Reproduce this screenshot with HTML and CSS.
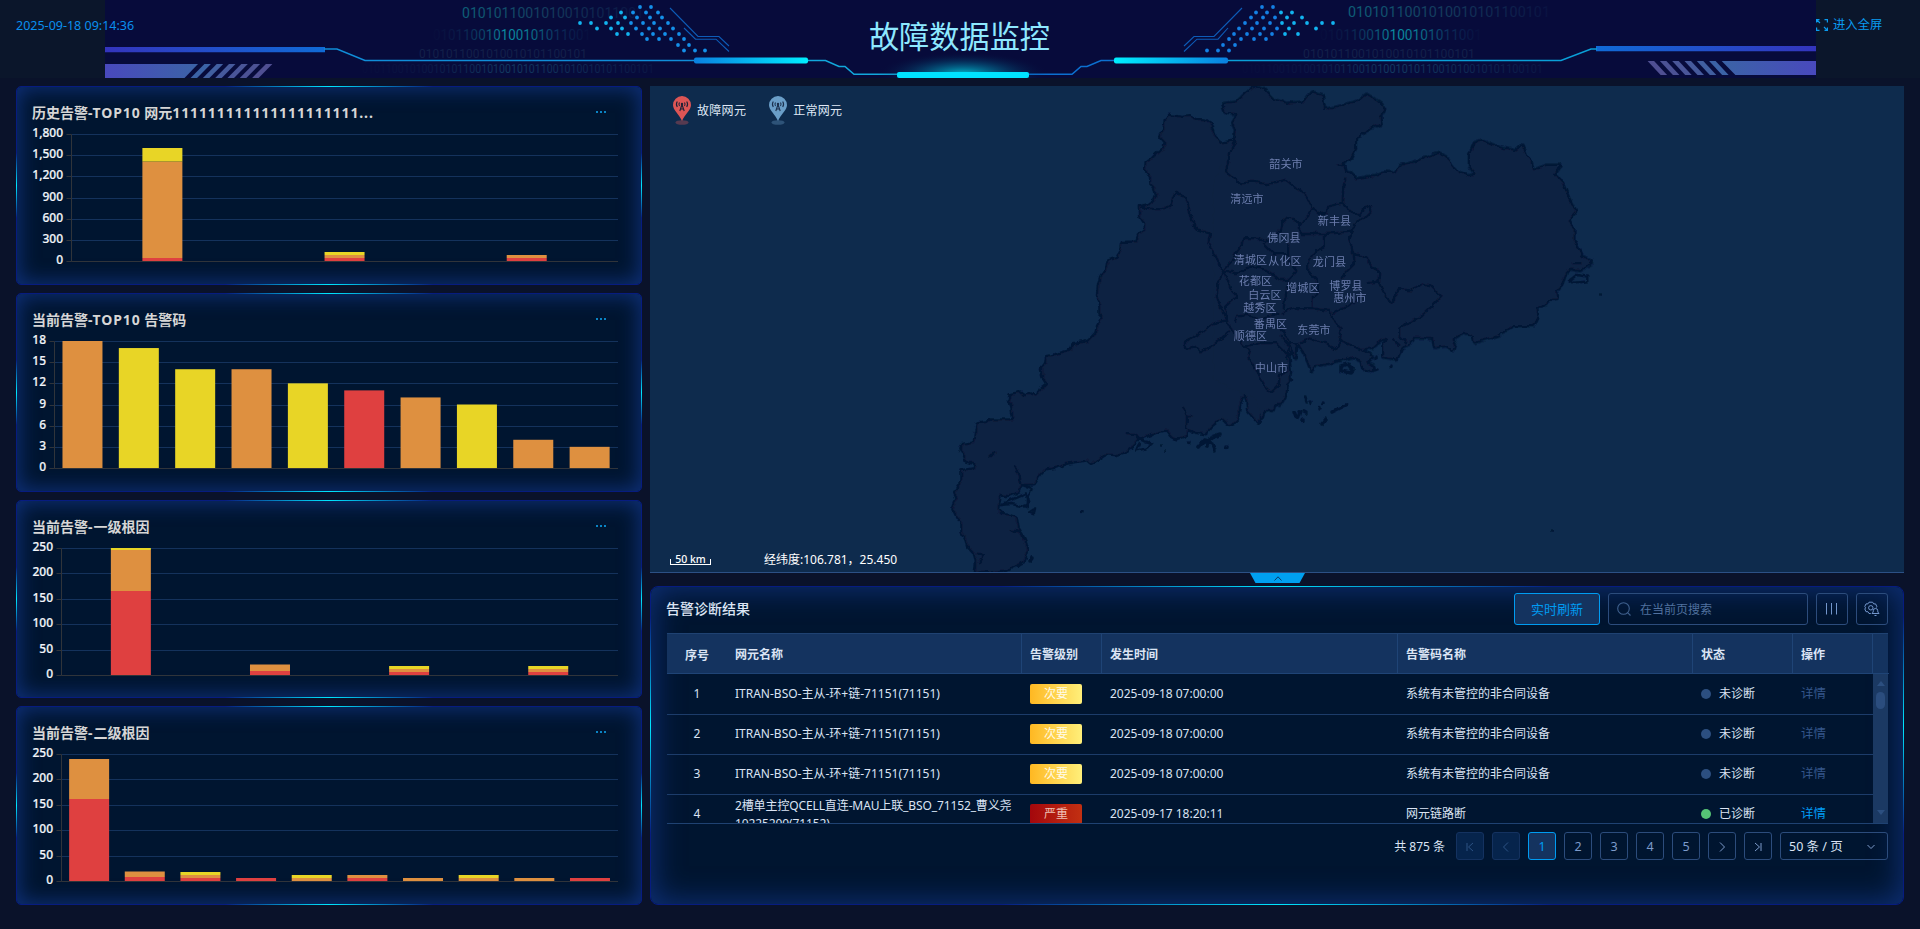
FILE: index.html
```html
<!DOCTYPE html>
<html lang="zh-CN">
<head>
<meta charset="utf-8">
<title>故障数据监控</title>
<link rel="stylesheet" href="styles.css">
</head>
<body>
<header class="top">
  <svg class="banner" viewBox="105 0 1711 78" width="1711" height="78">
    <defs>
      <linearGradient id="barL"><stop offset="0" stop-color="#3434bd"/><stop offset="1" stop-color="#106bd6"/></linearGradient>
      <linearGradient id="barR"><stop offset="0" stop-color="#106bd6"/><stop offset="1" stop-color="#3434bd"/></linearGradient>
      <linearGradient id="blkL"><stop offset="0" stop-color="#4949bd"/><stop offset="1" stop-color="#3b63a6"/></linearGradient>
      <linearGradient id="blkR"><stop offset="0" stop-color="#3b63a6"/><stop offset="1" stop-color="#4949bd"/></linearGradient>
      <linearGradient id="cyL"><stop offset="0" stop-color="#0a80e0"/><stop offset="1" stop-color="#00efff"/></linearGradient>
      <linearGradient id="cyR"><stop offset="0" stop-color="#00efff"/><stop offset="1" stop-color="#0a80e0"/></linearGradient>
      <linearGradient id="n1"><stop offset="0" stop-color="#0d6078"/><stop offset=".45" stop-color="#143c5e"/><stop offset="1" stop-color="#0a1242"/></linearGradient>
      <linearGradient id="n2"><stop offset="0" stop-color="#080d3c"/><stop offset=".16" stop-color="#0a1a48"/><stop offset=".32" stop-color="#0b4468"/><stop offset=".46" stop-color="#0a90a4"/><stop offset=".6" stop-color="#0a7890"/><stop offset=".8" stop-color="#0b2a58"/><stop offset="1" stop-color="#080d3c"/></linearGradient>
      <linearGradient id="n4"><stop offset="0" stop-color="#080d3c"/><stop offset=".2" stop-color="#0b1543"/><stop offset=".5" stop-color="#123a60"/><stop offset="1" stop-color="#0b1644"/></linearGradient>
      <radialGradient id="glow"><stop offset="0" stop-color="#00d8e8" stop-opacity=".85"/><stop offset=".5" stop-color="#0090b0" stop-opacity=".35"/><stop offset="1" stop-color="#070c3a" stop-opacity="0"/></radialGradient>
    </defs>
    <rect x="105" y="0" width="1711" height="78" fill="#070b3b"/>
    <g class="bits">
      <text x="462" y="18" font-size="15" textLength="182" lengthAdjust="spacingAndGlyphs" fill="url(#n1)">01010110010100101011001</text>
      <text x="433" y="40" font-size="14" textLength="158" lengthAdjust="spacingAndGlyphs" fill="url(#n2)">010110010100101011001</text>
      <text x="419" y="58" font-size="12" textLength="168" lengthAdjust="spacingAndGlyphs" fill="#13204a">0101011001010010101100101</text>
      <text x="362" y="73" font-size="12" textLength="292" lengthAdjust="spacingAndGlyphs" fill="url(#n4)">0101100101001010110010100101011001010010101100101</text>
      <text x="1348" y="17" font-size="15" textLength="202" lengthAdjust="spacingAndGlyphs" fill="url(#n1)">0101011001010010101100101</text>
      <text x="1320" y="40" font-size="14" textLength="162" lengthAdjust="spacingAndGlyphs" fill="url(#n2)">010110010100101011001</text>
      <text x="1303" y="58" font-size="12" textLength="172" lengthAdjust="spacingAndGlyphs" fill="#13204a">0101011001010010101100101</text>
      <text x="1242" y="73" font-size="12" textLength="301" lengthAdjust="spacingAndGlyphs" fill="url(#n4)">0101100101001010110010100101011001010010101100101</text>
    </g>
    <g id="stripes" fill="#4a5596"></g>
    <path d="M105 64H198L184.500 78H105z" fill="url(#blkL)"/>
    <path d="M1721.700 61H1816V75H1735.400z" fill="url(#blkR)"/>
    <path d="M105 47H325V52.200H105z" fill="url(#barL)"/>
    <path d="M1596 46H1816V51.200H1596z" fill="url(#barR)"/>
    <g fill="none" stroke-width="1.600">
      <path d="M324 49H337L365 60.500H694" stroke="#108dd8"/>
      <path d="M808 60.500H825.500L839 66.500H845L854 74.300H898" stroke="#12a8dc"/>
      <path d="M1028 74.300H1072L1081 66.500H1087L1101 60.500H1114" stroke="#0c70d0"/>
      <path d="M1228 60.500H1561L1591 49H1597" stroke="#0aa0d8"/>
      <g stroke="#0d5cb8" stroke-width="1.100">
        <path d="M670 8L698 36.500H719L729 46M684 28L695.500 39.200H716L729 51.500"/>
        <path d="M1242 8L1214 36.500H1194L1184 46M1228 28L1218 39.200H1197L1184 51.500"/>
      </g>
    </g>
    <rect x="694" y="57.500" width="114" height="6" rx="2" fill="url(#cyL)"/>
    <rect x="1114" y="57.500" width="114" height="6" rx="2" fill="url(#cyR)"/>
    <ellipse cx="963" cy="74" rx="86" ry="22" fill="url(#glow)"/>
    <rect x="897" y="72" width="132" height="6" rx="2" fill="#00e2ff"/>
    <g id="dots"></g>
  </svg>
  <h1 class="title">故障数据监控</h1>
  <span class="clock">2025-09-18 09:14:36</span>
  <span class="full">
    <svg width="12" height="12" viewBox="0 0 12 12" fill="none" stroke="currentColor" stroke-width="1.200"><path d="M.6 3.500V.6H3.500M.6.6L4 4M8.500.6h2.900v2.900M.6 8.500v2.900h2.900M11.400 8.500v2.900H8.500M11.400 11.400L8 8"/></svg>
    <span>进入全屏</span>
  </span>
</header>
<main class="board">
  <section class="charts">
    <article class="panel"><div class="phead"><h2>历史告警-<span class="lat">TOP10</span> 网元<span class="lat">111111111111111111111...</span></h2><i class="more"></i></div><svg class="chart" id="c1"></svg></article>
    <article class="panel"><div class="phead"><h2>当前告警-<span class="lat">TOP10</span> 告警码</h2><i class="more"></i></div><svg class="chart" id="c2"></svg></article>
    <article class="panel"><div class="phead"><h2>当前告警<span class="lat">-</span>一级根因</h2><i class="more"></i></div><svg class="chart" id="c3"></svg></article>
    <article class="panel"><div class="phead"><h2>当前告警<span class="lat">-</span>二级根因</h2><i class="more"></i></div><svg class="chart" id="c4"></svg></article>
  </section>
  <section class="right">
    <div class="map">
      <svg class="geo" viewBox="650 86 1254 486" width="1254" height="486">
        <defs>
          <filter id="rough" x="-5%" y="-5%" width="110%" height="110%"><feTurbulence type="fractalNoise" baseFrequency=".14" numOctaves="2" seed="4"/><feDisplacementMap in="SourceGraphic" scale="5" xChannelSelector="R" yChannelSelector="G"/></filter>
          <g id="shape">
            <path class="fixed" transform="translate(640 80) scale(.4082 .3333)" d="M1465 185L1445 187 1420 192 1415 180 1405 165 1395 130 1385 122 1360 120 1345 112 1325 114 1310 110 1295 108 1288 120 1285 150 1277 170 1288 185 1285 205 1268 222 1255 238 1241 250 1240 270 1252 290 1253 310 1262 325 1267 345 1262 360 1245 375 1227 380 1228 410 1238 430 1240 450 1222 465 1215 488 1182 489 1178 510 1170 525 1172 535 1148 545 1143 570 1130 590 1124 620 1122 650 1128 680 1128 700 1135 708 1122 740 1118 760 1100 783 1088 790 1062 795 1058 810 1030 822 998 832 995 850 985 868 988 890 998 912 985 925 975 945 968 952 955 942 940 950 930 940 908 945 906 960 912 975 914 1000 918 1020 905 1022 880 1022 860 1022 850 1030 828 1033 823 1060 820 1090 790 1095 785 1105 795 1120 800 1143 825 1150 822 1168 790 1173 790 1200 780 1220 772 1238 778 1255 768 1285 778 1310 790 1330 790 1355 800 1380 805 1400 820 1420 825 1440 825 1455 823 1475 850 1470 870 1475 895 1470 920 1455 940 1440 948 1410 940 1375 925 1345 920 1315 905 1308 885 1305 874 1290 878 1265 882 1240 900 1245 925 1235 932 1215 928 1190 918 1155 930 1190 935 1212 965 1210 975 1190 992 1165 1020 1160 1045 1148 1070 1142 1095 1138 1105 1148 1120 1138 1140 1120 1165 1122 1190 1112 1205 1098 1215 1080 1240 1068 1265 1055 1290 1048 1300 1065 1315 1075 1338 1065 1342 1045 1360 1055 1385 1060 1395 1042 1425 1010 1445 1032 1462 1022 1468 970 1480 935 1488 960 1490 990 1515 1028 1520 1000 1540 985 1548 975 1567 970 1575 950 1580 920 1592 900 1580 850 1560 500 1520 185"/>
            <path class="fixed" transform="translate(1180 80) scale(.3333)" d="M230 960L245 1010 255 980 275 990 285 960 300 975 312 955 320 920 330 880 325 830 335 800 345 830 350 790 358 792 375 820 395 870 405 855 440 850 520 828 545 840 550 865 575 872 580 860 560 850 575 830 545 810 575 800 600 780 625 770 610 800 610 830 650 835 665 800 690 790 700 770 730 770 760 775 765 800 800 795 820 810 825 795 815 775 850 755 880 765 885 785 950 765 1000 735 1060 735 1072 710 1068 680 1090 675 1115 655 1130 655 1125 635 1145 610 1160 570 1175 565 1200 570 1235 545 1205 530 1195 510 1180 480 1180 450 1165 420 1185 395 1165 355 1145 310 1122 280 1138 258 1100 258 1060 272 1050 240 1035 225 1025 200 1010 215 960 205 905 183 885 190 870 225 870 255 888 285 860 290 825 270 805 240 775 222 740 235 700 250 660 258 645 280 610 278 590 290 530 302 515 285 495 275 490 260 467 255 490 248 510 235 525 205 525 175 565 145 605 130 600 108 612 90 600 70 560 45 535 65 490 78 432 90 425 45 395 38 370 68 320 72 280 60 245 25 225 20 200 40 170 68 130 72 138 95 175 100 160 125 168 150 165 185 100 300 100 900z"/>
          </g>
        </defs>
        <g filter="url(#rough)">
          <use href="#shape" class="edge"/>
          <use href="#shape" class="land"/>
          <g class="lines" transform="translate(1180 80) scale(.3333)">
            <path d="M168 180L150 220 138 275 165 295 180 312 215 305 260 312 318 300 350 325 375 340 395 382 385 405 360 435 350 420 325 412 305 430 298 455 275 475 255 483 230 475 190 475 185 495 172 515 150 550 130 570M395 382L430 405 440 400 445 380 487 368 490 320 497 295M487 368L505 390 540 408 550 385 570 378 575 395 560 410 530 425 515 455 480 458 435 462 365 462 355 440M435 462V500L400 520 385 545V570M515 455L508 480 520 520 525 550 500 575 480 600M520 520L560 535 575 560 598 575 595 605 560 610M595 605L610 635 635 670 655 625 690 632 725 613 755 620 782 650 755 680 715 715 658 742V765L680 790M458 700L500 680 540 655M305 700L340 685 400 685 450 693 460 720 485 745 480 780 470 810 440 790 390 775 360 790M480 780L545 810M385 570L410 600 415 640 395 655V685M325 490V540L350 570 325 600 310 690M0 345L20 355 30 400 45 445 90 460 85 490 110 540 130 570 115 610 110 650 130 700 140 725M130 570L170 580 220 560 260 570 300 600H325M130 570L150 620 170 650 135 680 140 720 155 750 190 800 210 810M140 720L100 730 70 755 15 785V805L45 800 60 815 100 795 130 770 150 755M210 810L205 830 235 880 255 920 275 938 295 920 300 885 325 870M190 800L240 790 290 790 310 810 325 835M165 725L170 710 200 705 240 715 300 700M300 740L330 790 355 790M250 490L280 520 325 520M1170 600L1190 585 1222 590V605L1180 608zM300 765L330 800 320 830 345 815M640 775L660 800M1175 550L1205 550"/>
          </g>
          <g class="lines" transform="translate(640 80) scale(.4082 .3333)">
            <path d="M1227 380L1250 385 1270 388 1285 385 1300 378 1305 355 1314 335 1330 350M1330 980L1340 1010 1338 1050M1340 1010H1355M882 1275L905 1262 945 1240 955 1270 940 1280 910 1272zM935 1215L960 1225 950 1260 950 1285M955 1295L968 1285 965 1300zM905 1350L930 1355 940 1380M918 1155L930 1190 935 1212M1190 1060L1215 1062 1225 1080 1255 1090 1240 1105 1215 1112 1225 1090M825 1420L840 1425 830 1450"/>
          </g>
          <g class="isles">
            <path d="M1198 447l6-7M1207 445l5-8 8-3M1205 441l7 3 3 7M1294 412l3 6 3-6M1305 397l1 4M1311 402v.5M1323 403v.5M1332 412l8-4 6-3M1322 424l3-4M1319 408v-.5M1304 412l2 1M1341 371v-5l7-2 5 6-3 3zM1374 370l3-1M1391 366v.5M1303 420v.5M1376 357v2M1189 442v.5M1226 447v.5M1082 511v.5M1030 561l2-3M990 456l4-2"/>
            <path class="tiny" d="M1600 294v1M1552 529v1M1162 446v1M1165 451v1"/>
          </g>
        </g>
        <g class="names">
          <text x="1286" y="167.500">韶关市</text><text x="1247" y="203">清远市</text><text x="1334.500" y="224.500">新丰县</text><text x="1284" y="242">佛冈县</text><text x="1250.500" y="264">清城区</text><text x="1285" y="264.500">从化区</text><text x="1329.500" y="265.500">龙门县</text><text x="1255.500" y="285">花都区</text><text x="1303" y="292">增城区</text><text x="1346" y="289.500">博罗县</text><text x="1265" y="299">白云区</text><text x="1350" y="301.500">惠州市</text><text x="1260" y="312">越秀区</text><text x="1270.500" y="327.500">番禺区</text><text x="1314" y="334">东莞市</text><text x="1250.500" y="340">顺德区</text><text x="1271.500" y="372">中山市</text>
        </g>
      </svg>
      <div class="legend">
        <span class="key bad"><svg width="18" height="30" viewBox="0 0 18 30"><ellipse cx="9" cy="26.500" rx="6.500" ry="2.300" fill="currentColor" opacity=".35"/><path d="M9 0a9 9 0 0 1 9 9c0 5-6 9-9 16C6 18 0 14 0 9a9 9 0 0 1 9-9z" fill="currentColor"/><path d="M9 8.500L6.800 15M9 8.500l2.200 6.500M7.500 13h3M6.500 6.500a3 3 0 0 0 0 3.500M11.500 6.500a3 3 0 0 1 0 3.500M4.300 5.500a5 5 0 0 0 0 5.500M13.700 5.500a5 5 0 0 1 0 5.500" fill="none" stroke="#1b2238" stroke-width="1.100"/><circle cx="9" cy="8" r="1.200" fill="#1b2238"/></svg>故障网元</span>
        <span class="key ok"><svg width="18" height="30" viewBox="0 0 18 30"><ellipse cx="9" cy="26.500" rx="6.500" ry="2.300" fill="currentColor" opacity=".35"/><path d="M9 0a9 9 0 0 1 9 9c0 5-6 9-9 16C6 18 0 14 0 9a9 9 0 0 1 9-9z" fill="currentColor"/><path d="M9 8.500L6.800 15M9 8.500l2.200 6.500M7.500 13h3M6.500 6.500a3 3 0 0 0 0 3.500M11.500 6.500a3 3 0 0 1 0 3.500M4.300 5.500a5 5 0 0 0 0 5.500M13.700 5.500a5 5 0 0 1 0 5.500" fill="none" stroke="#1b2f4c" stroke-width="1.100"/><circle cx="9" cy="8" r="1.200" fill="#1b2f4c"/></svg>正常网元</span>
      </div>
      <div class="mapfoot"><span class="scale">50 km</span><span class="coord">经纬度:106.781，25.450</span></div>
      <div class="fold"><svg width="8" height="5" viewBox="0 0 8 5" fill="none" stroke="#0b3a68"><path d="M.5 4.500L4 .8l3.500 3.700"/></svg></div>
    </div>
    <div class="panel wide">
      <div class="bar">
        <h2>告警诊断结果</h2>
        <div class="tools">
          <button class="btn refresh">实时刷新</button>
          <div class="search"><svg width="14" height="14" viewBox="0 0 14 14" fill="none" stroke="#3f618f" stroke-width="1.100"><circle cx="6.500" cy="6.500" r="5.800"/><path d="M10.600 10.600l2.900 2.900"/></svg><span>在当前页搜索</span></div>
          <button class="btn sq"><svg width="14" height="14" viewBox="0 0 14 14" stroke="#7396cc" fill="none"><path d="M1.500 1v11.500M6.500 1v11.500M11.500 1v11.500"/></svg></button>
          <button class="btn sq"><svg width="16" height="16" viewBox="0 0 16 16" stroke="#7396cc" fill="none"><path d="M6.800 12.500H5L3.900 10.700H2L.8 8 1.600 6.800.8 5.500 2 2.900H3.900L5 1.200H8.600L9.700 2.900H11.600L12.800 5.500 12.300 6.600"/><circle cx="6.800" cy="6.800" r="2.200"/><path d="M8 12.500h7l-1.200-1.500V9.800a2.300 2.300 0 0 0-4.600 0V11zM10.500 14.500h2"/></svg></button>
        </div>
      </div>
      <div class="table">
        <div class="row th"><b class="c">序号</b><b>网元名称</b><b>告警级别</b><b>发生时间</b><b>告警码名称</b><b>状态</b><b>操作</b><b></b></div>
        <div class="body">
          <div class="rows">
            <div class="row first"><span class="c">1</span><span>ITRAN-BSO-主从-环+链-71151(71151)</span><span><em class="tag">次要</em></span><span>2025-09-18 07:00:00</span><span>系统有未管控的非合同设备</span><span><i class="dot"></i>未诊断</span><span class="op">详情</span></div>
            <div class="row"><span class="c">2</span><span>ITRAN-BSO-主从-环+链-71151(71151)</span><span><em class="tag">次要</em></span><span>2025-09-18 07:00:00</span><span>系统有未管控的非合同设备</span><span><i class="dot"></i>未诊断</span><span class="op">详情</span></div>
            <div class="row"><span class="c">3</span><span>ITRAN-BSO-主从-环+链-71151(71151)</span><span><em class="tag">次要</em></span><span>2025-09-18 07:00:00</span><span>系统有未管控的非合同设备</span><span><i class="dot"></i>未诊断</span><span class="op">详情</span></div>
            <div class="row"><span class="c">4</span><span class="long">2槽单主控QCELL直连-MAU上联_BSO_71152_曹义尧10225200(71152)</span><span><em class="tag red">严重</em></span><span>2025-09-17 18:20:11</span><span>网元链路断</span><span><i class="dot on"></i>已诊断</span><span class="op on">详情</span></div>
          </div>
          <div class="scroll"><i class="up"></i><i class="thumb"></i><i class="down"></i></div>
        </div>
      </div>
      <div class="pager">
        <span class="total">共 875 条</span>
        <button class="pg off"><svg viewBox="0 0 10 10"><path d="M2 1v8M8 1L3.500 5 8 9"/></svg></button>
        <button class="pg off"><svg viewBox="0 0 10 10"><path d="M7 .5L2.500 5 7 9.500"/></svg></button>
        <button class="pg cur">1</button><button class="pg">2</button><button class="pg">3</button><button class="pg">4</button><button class="pg">5</button>
        <button class="pg"><svg viewBox="0 0 10 10"><path d="M3 .5L7.500 5 3 9.500"/></svg></button>
        <button class="pg"><svg viewBox="0 0 10 10"><path d="M8 1v8M2 1L6.500 5 2 9"/></svg></button>
        <div class="size"><span>50 条 / 页</span><svg width="8" height="6" viewBox="0 0 8 6"><path d="M.5 1L4 4.500 7.500 1"/></svg></div>
      </div>
    </div>
  </section>
</main>
<script src="app.js"></script>
</body>
</html>
```
FILE: styles.css
```css
* { box-sizing: border-box; margin: 0; padding: 0; }
body { width: 1920px; height: 929px; overflow: hidden; background: #0a122a; color: #dbe4f4; font: 12px/18px "Noto Sans", "Noto Sans CJK SC", sans-serif; }
i, em { font-style: normal; }
button { font: inherit; color: inherit; background: none; }

.top { position: relative; height: 78px; padding: 0 104px 0 105px; background: #0b162b; display: flex; justify-content: center; }
.banner { display: block; flex: none; }
.bits { font-family: Roboto, sans-serif; }
.title { position: absolute; left: 0; right: 1px; top: 15px; text-align: center; font-size: 30.2px; line-height: 44px; font-weight: 400; color: #8ee8ff; }
.clock { position: absolute; left: 16px; top: 17px; font-size: 12.5px; color: #0a8fee; }
.full { position: absolute; left: 1816px; top: 16px; display: flex; align-items: center; gap: 5px; font-size: 12.3px; color: #0a9bf0; }

.board { display: grid; grid-template-columns: 626px 1254px; gap: 8px; padding: 8px 16px 0; }
.charts { display: grid; grid-template-rows: repeat(4, 198.75px); gap: 8px; }
.panel { position: relative; border: 1px solid #071c80; border-radius: 5px; background: #001530; box-shadow: inset 0 0 20px 2px #0e3078; }
.panel::before, .panel::after { content: ""; position: absolute; pointer-events: none; }
.panel::before { left: 208px; right: 208px; top: -1px; bottom: -1px; background: linear-gradient(90deg, transparent, #00e6ff, transparent) top / 100% 1px no-repeat, linear-gradient(90deg, transparent, #00e6ff, transparent) bottom / 100% 1px no-repeat; }
.panel::after { left: -1px; right: -1px; top: 66px; bottom: 66px; background: linear-gradient(transparent, #00e6ff, transparent) left / 1px 100% no-repeat, linear-gradient(transparent, #00e6ff, transparent) right / 1px 100% no-repeat; }
.phead { display: flex; justify-content: space-between; padding: 16px 34px 0 15px; height: 36px; }
.phead h2 { font-size: 14px; line-height: 20px; font-weight: 700; color: #d6d6d6; white-space: nowrap; }
.lat { letter-spacing: .9px; }
.more { width: 11px; height: 2px; margin-top: 8px; background: repeating-linear-gradient(90deg, #0a84c4 0 2px, transparent 2px 4px); }
.chart { display: block; width: 624px; height: 150px; }
.chart text { font-size: 12px; font-weight: 500; fill: #f2f5fa; stroke: #f2f5fa; stroke-width: .2px; text-anchor: end; }

.right { display: flex; flex-direction: column; gap: 13px; }
.map { position: relative; height: 487px; background: #0e2b4d; border-bottom: 1px solid #2c5084; }
.geo { display: block; }
.fixed { vector-effect: non-scaling-stroke; }
.edge { fill: #061836; stroke: #061836; stroke-width: 4.6px; stroke-linejoin: round; }
.land { fill: #0e2242; stroke: none; }
.lines path { fill: none; stroke: #061836; stroke-width: 2.4px; vector-effect: non-scaling-stroke; stroke-linejoin: round; }
.isles path { fill: none; stroke: #061836; stroke-width: 3.6px; stroke-linecap: round; stroke-linejoin: round; }
.isles .tiny { stroke-width: 1.8px; }
.names text { font: 11px "Noto Sans CJK SC", sans-serif; letter-spacing: .2px; fill: #6c7eae; text-anchor: middle; }
.legend { position: absolute; left: 23px; top: 10px; display: flex; gap: 23px; }
.key { display: flex; align-items: center; gap: 6px; color: #dfe8f5; letter-spacing: .3px; }
.bad svg { color: #dd5555; }
.ok svg { color: #6a9ec8; }
.mapfoot { position: absolute; left: 20px; bottom: 3px; display: flex; gap: 53px; align-items: center; color: #fff; }
.scale { width: 41px; height: 6px; margin-top: 3px; border: 1px solid #fff; border-top: 0; font-size: 10.5px; line-height: 1px; text-align: center; font-weight: 500; }
.fold { position: absolute; left: 600px; top: 487px; width: 55px; height: 10px; background: #00a0f0; clip-path: polygon(0 0, 100% 0, 90% 100%, 10% 100%); display: flex; justify-content: center; align-items: center; }

.wide { height: 319px; padding: 6px 15px 0 16px; border-radius: 8px; box-shadow: inset 0 0 30px 2px #0e3078; }
.wide::before { left: 350px; right: 350px; }
.wide::after { top: 30px; bottom: 70px; }
.bar { display: flex; justify-content: space-between; align-items: center; height: 32px; }
.bar h2 { font-size: 14px; font-weight: 500; margin-left: -1px; }
.tools { display: flex; gap: 8px; }
.btn, .search { height: 32px; border: 1px solid #2c4c7c; border-radius: 3px; display: flex; align-items: center; justify-content: center; }
.refresh { width: 86px; font-size: 13px; color: #009cf2; border-color: #009cf2; background: #14335f; }
.search { width: 200px; justify-content: flex-start; padding-left: 8px; gap: 9px; color: #50719f; }
.search span { padding-top: 1px; }
.sq { width: 32px; }
.table { margin-top: 8px; height: 191px; border-bottom: 1px solid #1f4272; }
.row { display: grid; grid-template-columns: 60px 295px 80px 296px 295px 100px 80px; height: 40px; }
.row > * { display: flex; align-items: center; padding: 0 8px 1px; border-bottom: 1px solid #1c3c6a; box-shadow: 1px 0 0 #001530; }
.first { height: 41px; }
.first > * { padding-bottom: 0; }
.row > .c { justify-content: center; }
.row > .long { letter-spacing: -.12px; padding: 0 4px 0 8px; word-break: break-all; }
.th { grid-template-columns: 60px 295px 80px 296px 295px 100px 80px 15px; height: 41px; background: #14335f; border-top: 1px solid #1f4272; }
.th > b { padding: 3px 8px 0; font-weight: 600; border-right: 1px solid #1f4476; border-bottom-color: #1f4476; box-shadow: none; }
.th > b.c { padding-top: 4px; }
.th > b:first-child, .th > b:last-child { border-right: 0; }
.body { display: grid; grid-template-columns: 1206px 15px; height: 149px; overflow: hidden; }
.rows { overflow: hidden; }
.tag { width: 52px; height: 20px; line-height: 20px; text-align: center; border-radius: 2px; color: #fffbe8; background: linear-gradient(90deg, #ffb822, #ffef7a); }
.tag.red { color: #f0c0b4; background: linear-gradient(90deg, #a4070c, #c23012); }
.dot { width: 10px; height: 10px; border-radius: 50%; background: #2c4f80; margin-right: 8px; }
.dot.on { background: #55c475; }
.row > .op { font-size: 12.5px; color: #34568a; }
.row > .op.on { color: #009cf5; }
.scroll { background: #1b3963; display: flex; flex-direction: column; align-items: center; padding: 7px 0 8px; }
.up, .down { border: 4px solid transparent; }
.up { border-top: 0; border-bottom: 5px solid #2c4f80; }
.down { border-bottom: 0; border-top: 5px solid #2c4f80; margin-top: auto; }
.thumb { width: 9px; height: 17px; border-radius: 5px; background: #2b4d7e; margin-top: 6px; }
.pager { display: flex; justify-content: flex-end; align-items: center; gap: 8px; margin-top: 8px; height: 28px; }
.total { margin-right: 3px; padding-top: 1px; }
.pg { width: 28px; height: 28px; border: 1px solid #2c4c7c; border-radius: 3px; display: flex; align-items: center; justify-content: center; padding-top: 1px; font-size: 12.5px; color: #7d9bcb; }
.pg svg { width: 10px; height: 10px; }
.pg path, .size path { fill: none; stroke: #7d9bcb; }
.pg.off { background: #06244c; border-color: #143260; }
.pg.off path { stroke: #2c5284; }
.pg.cur { background: #14335f; border-color: #009cf2; color: #009cf2; }
.size { width: 108px; height: 28px; border: 1px solid #2c4c7c; border-radius: 3px; display: flex; align-items: center; justify-content: space-between; padding: 1px 12px 0 8px; font-size: 12.5px; }
```
FILE: app.js
```js
const R = '#df4040', O = '#de9040', Y = '#e8d526';

/* axis: x of the value axis; top/bottom of the plot are shared by all charts */
const charts = {
  c1: { axis: 55, ticks: ['1,800', '1,500', '1,200', '900', '600', '300', '0'], bars: [
    [[R, 3], [O, 96.5], [Y, 13.5]], [[R, 3], [O, 3], [Y, 3]], [[R, 3], [O, 3]]] },
  c2: { axis: 38, ticks: [18, 15, 12, 9, 6, 3, 0], bars:
    [[O, 18], [Y, 17], [Y, 14], [O, 14], [Y, 12], [R, 11], [O, 10], [Y, 9], [O, 4], [O, 3]].map(([c, v]) => [[c, v * 127 / 18]]) },
  c3: { axis: 45, ticks: [250, 200, 150, 100, 50, 0], bars: [
    [[R, 84], [O, 41], [Y, 2]], [[R, 4], [O, 6.5]], [[R, 3], [O, 3], [Y, 3]], [[R, 3], [O, 3], [Y, 3]]] },
  c4: { axis: 45, ticks: [250, 200, 150, 100, 50, 0], bars: [
    [[R, 82], [O, 40]], [[R, 4], [O, 5.5]], [[R, 3], [O, 3], [Y, 3]], [[R, 3]], [[O, 3], [Y, 3]],
    [[R, 3], [O, 3]], [[O, 3]], [[O, 3], [Y, 3]], [[O, 3]], [[R, 3]]] }
};

for (const [id, c] of Object.entries(charts)) {
  const top = 11.5, bottom = 138.5, right = 601, x0 = c.axis - .5;
  let s = '';
  c.ticks.forEach((t, i) => {
    const last = i === c.ticks.length - 1;
    const y = Math.round(top + (bottom - top) * i / (c.ticks.length - 1) - .5) + .5;
    s += `<path d="M${x0} ${y}H${right}" stroke="${last ? '#30343a' : '#14325c'}"/>`;
    s += `<path d="M${x0 - 5} ${y}H${x0}" stroke="#30343a"/>`;
    s += `<text x="${x0 - 8.5}" y="${y + 2.5}">${t}</text>`;
  });
  s += `<path d="M${x0} ${top}V${bottom}" stroke="#30343a"/>`;
  const band = (right - x0) / c.bars.length;
  c.bars.forEach((stack, i) => {
    const x = x0 + band * (i + .5) - 20.2;
    let y = bottom - .5;
    for (const [color, h] of stack) {
      y -= h;
      s += `<rect x="${x}" y="${y}" width="40" height="${h}" fill="${color}"/>`;
    }
  });
  document.getElementById(id).innerHTML = s;
}

/* banner dot clusters, one list of x positions per row */
const rows = [7, 12.5, 17.5, 23, 28.5, 34, 39, 45, 50.5];
const left = [[640, 651], [621, 633, 646, 658], [611, 625, 637, 650, 662], [580, 591, 606, 618, 631, 643, 654, 668],
  [597, 611, 622, 636, 649, 660, 673], [617, 628, 642, 653, 665, 679], [647, 659, 671, 684], [678, 689], [684, 695, 705]];
const rightDots = [[1262, 1273], [1256, 1267, 1281, 1292], [1251, 1263, 1275, 1287, 1302], [1245, 1257, 1270, 1282, 1294, 1307, 1322, 1333],
  [1239, 1252, 1264, 1277, 1289, 1316], [1234, 1247, 1260, 1272, 1285, 1298], [1229, 1241, 1254, 1266], [1223, 1235], [1207, 1218, 1229]];
let d = '';
rows.forEach((y, i) => {
  left[i].forEach(x => d += `<circle cx="${x}" cy="${y}" r="1.9" fill="${x < 630 ? '#12b4f0' : '#1490ea'}"/>`);
  rightDots[i].forEach(x => d += `<circle cx="${x}" cy="${y}" r="1.9" fill="${x > 1280 ? '#12b4f0' : '#1480e4'}"/>`);
});
document.getElementById('dots').innerHTML = d;

let st = '';
for (let k = 0; k < 6; k++) {
  const a = 190.6 + 12.3 * k, b = 1647.6 + 12.3 * k;
  st += `<path fill="${['#3b63a6', '#415fa0', '#465a9c', '#4a5698', '#4c5294', '#4f4f92'][k]}" d="M${a} 78h6.500l13.800-14h-6.500z"/>`;
  st += `<path fill="${['#4f4f92', '#4c5294', '#4a5698', '#465a9c', '#415fa0', '#3b63a6'][k]}" d="M${b} 61h6.500l13 14h-6.500z"/>`;
}
document.getElementById('stripes').innerHTML = st;
```
